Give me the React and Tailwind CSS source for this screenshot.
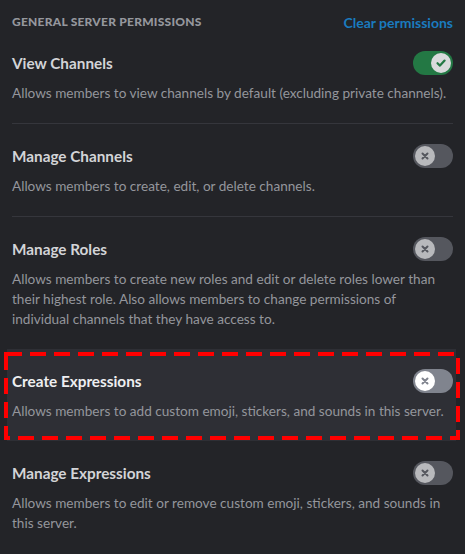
import React from 'react';

const perms = [
  {
    title: 'View Channels',
    lines: ['Allows members to view channels by default (excluding private channels).'],
    on: true,
  },
  {
    title: 'Manage Channels',
    lines: ['Allows members to create, edit, or delete channels.'],
  },
  {
    title: 'Manage Roles',
    lines: [
      'Allows members to create new roles and edit or delete roles lower than',
      'their highest role. Also allows members to change permissions of',
      'individual channels that they have access to.',
    ],
  },
  {
    title: 'Create Expressions',
    lines: ['Allows members to add custom emoji, stickers, and sounds in this server.'],
    active: true,
  },
  {
    title: 'Manage Expressions',
    lines: ['Allows members to edit or remove custom emoji, stickers, and sounds in', 'this server.'],
    last: true,
  },
];

function Toggle({ on, active }) {
  if (on) {
    return (
      <div className="w-10 h-6 rounded-full bg-[#237844] flex items-center justify-end px-[2px] shrink-0">
        <div className="w-5 h-5 rounded-full bg-[#d9dadc] flex items-center justify-center">
          <svg width="12" height="12" viewBox="0 0 12 12" fill="none">
            <path d="M2.5 6.2 L5 8.6 L9.6 3.6" stroke="#237844" strokeWidth="2.2" strokeLinecap="round" strokeLinejoin="round" />
          </svg>
        </div>
      </div>
    );
  }
  return (
    <div className={`w-10 h-6 rounded-full flex items-center px-[2px] shrink-0 ${active ? 'bg-[#80848e]' : 'bg-[#55575e]'}`}>
      <div className={`w-5 h-5 rounded-full flex items-center justify-center ${active ? 'bg-white' : 'bg-[#b8b9bc]'}`}>
        <svg width="10" height="10" viewBox="0 0 10 10" fill="none">
          <path d="M2.5 2.5 L7.5 7.5 M7.5 2.5 L2.5 7.5" stroke={active ? '#80848e' : '#55575e'} strokeWidth="2" strokeLinecap="round" />
        </svg>
      </div>
    </div>
  );
}

function PermRow({ perm, first }) {
  const base = first ? 'pb-5' : 'py-5';
  const rowClass = perm.active
    ? `${base} relative -mt-px -ml-[5px] -mr-[3px] pl-[5px] pr-[3px] bg-[#2e2f35]`
    : `${base} ${perm.last ? '' : 'border-b border-[#35363c]'}`;

  return (
    <div className={rowClass}>
      <div className="h-6 flex items-center justify-between">
        <span className={`text-[15.3px] font-bold leading-5 ${perm.active ? 'text-[#eeeff1]' : 'text-[#d3d4d7]'}`}>
          {perm.title}
        </span>
        <Toggle on={perm.on} active={perm.active} />
      </div>
      <p className="mt-2 text-[13.6px] leading-5 text-[#94969c] whitespace-nowrap">
        {perm.lines.map((line, i) => (
          <React.Fragment key={i}>
            {i > 0 && <br />}
            {line}
          </React.Fragment>
        ))}
      </p>

      {/* annotation frame */}
      {perm.active && (
        <svg className="absolute left-[-3px] top-[3px] w-[456px] h-[88px] pointer-events-none" viewBox="0 0 456 88" fill="none">
          <rect x="2" y="2" width="452" height="84" stroke="#ff0000" strokeWidth="4" strokeDasharray="16 8" />
        </svg>
      )}
    </div>
  );
}

export default function App() {
  return (
    <div className="min-h-screen bg-[#232428] px-3 pt-[14px] font-['Lato',sans-serif]">
      <div className="flex items-center justify-between h-4 mb-[21px]">
        <span className="text-[12px] font-black uppercase tracking-[0.02em] text-[#95979d]">
          General Server Permissions
        </span>
        <button className="text-[14px] font-bold text-[#1a7bbf]">Clear permissions</button>
      </div>

      {perms.map((perm, i) => (
        <PermRow key={perm.title} perm={perm} first={i === 0} />
      ))}
    </div>
  );
}
